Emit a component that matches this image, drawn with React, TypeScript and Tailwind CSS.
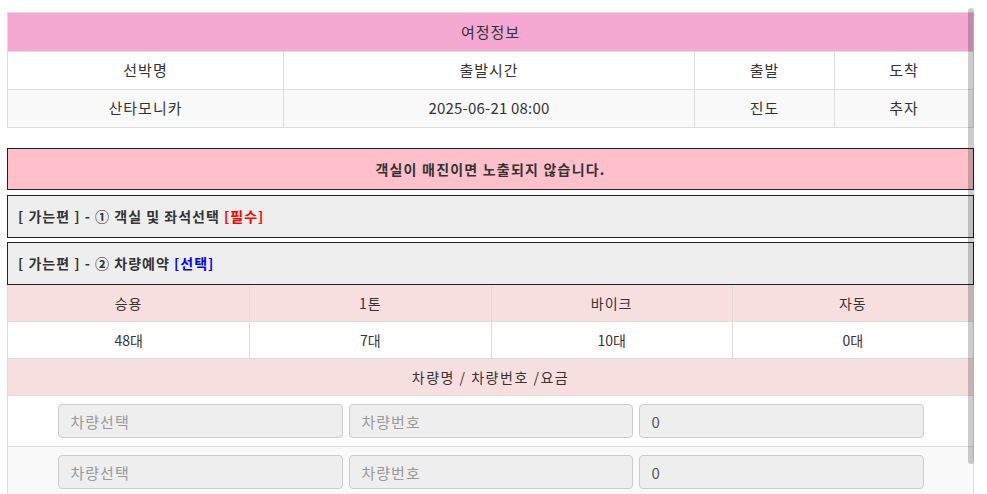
const font = { fontFamily: '"Noto Sans CJK KR", "Noto Sans", sans-serif' };

const trip = [
  { label: '선박명', value: '산타모니카', w: 'w-[275px]', num: false },
  { label: '출발시간', value: '2025-06-21 08:00', w: 'w-[411px]', num: true },
  { label: '출발', value: '진도', w: 'w-[140px]', num: false },
  { label: '도착', value: '추자', w: 'flex-1', num: false },
];

const cars = [
  { name: '승용', count: '48대' },
  { name: '1톤', count: '7대' },
  { name: '바이크', count: '10대' },
  { name: '자동', count: '0대' },
];

const inputCls =
  'h-[34px] rounded-[4px] border border-[#ccc] bg-[#eee] px-3 text-[15px] tracking-[1px] text-[#555] placeholder:text-[#999] outline-none';

function CarRow({ striped }: { striped?: boolean }) {
  return (
    <div
      className={`flex h-[51px] items-center justify-center gap-[6px] border-t border-[#ddd] ${
        striped ? 'bg-[#f9f9f9]' : 'bg-white'
      }`}
    >
      <input readOnly placeholder="차량선택" className={`${inputCls} w-[285px]`} style={font} />
      <input readOnly placeholder="차량번호" className={`${inputCls} w-[284px]`} style={font} />
      <input readOnly value="0" className={`${inputCls} w-[285px]`} style={font} />
    </div>
  );
}

export default function App() {
  return (
    <div className="relative h-[494px] overflow-hidden bg-white text-[#333]" style={font}>
      <div className="pl-[7px] pr-[13px] pt-[12px]">
        {/* 여정정보 */}
        <div className="border border-[#ddd] text-[15px]">
          <div className="flex h-[38px] items-center justify-center bg-[#f5a8d1] tracking-[1px]">여정정보</div>
          <div className="flex h-[38px] border-t border-[#ddd] bg-white">
            {trip.map((t, i) => (
              <div
                key={t.label}
                className={`${t.w} flex items-center justify-center tracking-[1px] ${
                  i > 0 ? 'border-l border-[#ddd]' : ''
                }`}
              >
                {t.label}
              </div>
            ))}
          </div>
          <div className="flex h-[38px] border-t border-[#ddd] bg-[#f9f9f9]">
            {trip.map((t, i) => (
              <div
                key={t.label}
                className={`${t.w} flex items-center justify-center ${t.num ? 'tracking-[0.2px]' : 'tracking-[1px]'} ${
                  i > 0 ? 'border-l border-[#ddd]' : ''
                }`}
              >
                {t.value}
              </div>
            ))}
          </div>
        </div>

        <div className="mt-[20px] flex h-[42px] items-center justify-center border border-[#222] bg-[#ffc0cb] text-[14px] font-bold tracking-[1.2px]">
          객실이 매진이면 노출되지 않습니다.
        </div>

        <div className="mt-[5px] flex h-[43px] items-center border border-[#222] bg-[#eee] pl-[10px] text-[14px] font-bold tracking-[1px]">
          [ 가는편 ] - ① 객실 및 좌석선택&nbsp;<span className="text-[#f00]">[필수]</span>
        </div>

        <div className="mt-[4px] flex h-[43px] items-center border border-[#222] bg-[#eee] pl-[10px] text-[14px] font-bold tracking-[1px]">
          [ 가는편 ] - ② 차량예약&nbsp;<span className="text-[#00f]">[선택]</span>
        </div>

        {/* 차량예약 */}
        <div className="border-x border-[#ddd] text-[14px]">
          <div className="grid h-[36px] grid-cols-4 bg-[#f7dfe0]">
            {cars.map((c, i) => (
              <div
                key={c.name}
                className={`flex items-center justify-center tracking-[1px] ${i > 0 ? 'border-l border-[#ddd]' : ''}`}
              >
                {c.name}
              </div>
            ))}
          </div>
          <div className="grid h-[37px] grid-cols-4 border-t border-[#ddd] bg-white">
            {cars.map((c, i) => (
              <div key={c.name} className={`flex items-center justify-center ${i > 0 ? 'border-l border-[#ddd]' : ''}`}>
                {c.count}
              </div>
            ))}
          </div>
          <div className="flex h-[37px] items-center justify-center border-t border-[#ddd] bg-[#f7dfe0] tracking-[1.5px]">
            차량명 / 차량번호 /요금
          </div>
          <CarRow />
          <CarRow striped />
        </div>
      </div>

      {/* scrollbar thumb */}
      <div className="absolute left-[968px] top-[8px] h-[456px] w-[6px] rounded-[3px] bg-black/20" />
    </div>
  );
}
